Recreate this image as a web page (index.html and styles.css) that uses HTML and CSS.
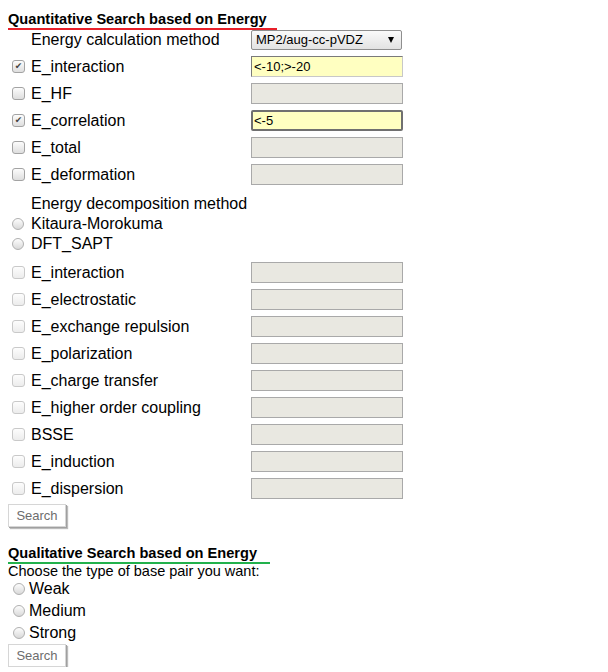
FILE: index.html
```html
<!DOCTYPE html>
<html>
<head>
    <title>Energy Search</title>
    <meta charset="utf-8" />
    <link rel="stylesheet" href="styles.css">
</head>
<body>
    <h3 class="title title-red">Quantitative Search based on Energy</h3>
    <div class="fields">
        <span></span>
        <span class="lbl">Energy calculation method</span>
        <span class="select-wrap">
            <select class="method">
                <option>MP2/aug-cc-pVDZ</option>
            </select>
        </span>

        <span class="check on">&#10004;</span>
        <span class="lbl">E_interaction</span>
        <input type="text" class="field filled" value="<-10;>-20">

        <span class="check"></span>
        <span class="lbl">E_HF</span>
        <input type="text" class="field">

        <span class="check on">&#10004;</span>
        <span class="lbl">E_correlation</span>
        <input type="text" class="field filled focused" value="<-5">

        <span class="check"></span>
        <span class="lbl">E_total</span>
        <input type="text" class="field">

        <span class="check"></span>
        <span class="lbl">E_deformation</span>
        <input type="text" class="field">
    </div>

    <div class="decomp">
        <div class="decomp-title">Energy decomposition method</div>
        <div class="radio-row"><span class="radio"></span>Kitaura-Morokuma</div>
        <div class="radio-row"><span class="radio"></span>DFT_SAPT</div>
    </div>

    <div class="fields fields-off">
        <span class="check"></span><span class="lbl">E_interaction</span><input type="text" class="field">
        <span class="check"></span><span class="lbl">E_electrostatic</span><input type="text" class="field">
        <span class="check"></span><span class="lbl">E_exchange repulsion</span><input type="text" class="field">
        <span class="check"></span><span class="lbl">E_polarization</span><input type="text" class="field">
        <span class="check"></span><span class="lbl">E_charge transfer</span><input type="text" class="field">
        <span class="check"></span><span class="lbl">E_higher order coupling</span><input type="text" class="field">
        <span class="check"></span><span class="lbl">BSSE</span><input type="text" class="field">
        <span class="check"></span><span class="lbl">E_induction</span><input type="text" class="field">
        <span class="check"></span><span class="lbl">E_dispersion</span><input type="text" class="field">
    </div>
    <button class="searchbtn">Search</button>

    <h3 class="title title-green second">Qualitative Search based on Energy</h3>
    <div class="choose">Choose the type of base pair you want:</div>
    <div class="strength">
        <div class="radio-row"><span class="radio"></span>Weak</div>
        <div class="radio-row"><span class="radio"></span>Medium</div>
        <div class="radio-row"><span class="radio"></span>Strong</div>
    </div>
    <button class="searchbtn">Search</button>
</body>
</html>
```

FILE: styles.css
```css
body {
    margin: 8px;
    font-family: "Liberation Sans", Arial, sans-serif;
    color: #000;
    background: #fff;
}

.title {
    display: block;
    width: fit-content;
    margin: 3px 0 -1px -5px;
    padding: 0 10px 0 5px;
    font-size: 14.6px;
    line-height: 17px;
    font-weight: bold;
}

.title-red {
    border-bottom: 2px solid #e8202a;
}

.title-green {
    border-bottom: 2px solid #22b14c;
    padding-right: 13px;
}

.second {
    margin-top: 17px;
    margin-bottom: 0;
    line-height: 18px;
}

.fields {
    display: grid;
    grid-template-columns: 23px 220px 152px;
    grid-auto-rows: 21px;
    row-gap: 6px;
    align-items: center;
}

.lbl {
    font-size: 16px;
    line-height: 21px;
    white-space: nowrap;
}

.check {
    display: block;
    box-sizing: border-box;
    width: 13px;
    height: 13px;
    margin-left: 4px;
    border: 1px solid #a3a3a3;
    border-radius: 3px;
    background: linear-gradient(#fcfcfc, #dedede);
    font-family: "DejaVu Sans", sans-serif;
    font-size: 9px;
    line-height: 11px;
    text-align: center;
    color: #444;
}

.fields-off .check {
    border-color: #c9c9c9;
    background: linear-gradient(#fdfdfd, #ececec);
}

.field {
    box-sizing: border-box;
    width: 152px;
    height: 21px;
    margin: 0;
    padding: 0 2px;
    border: 1px solid #a9a9a9;
    background: #e9e8e1;
    font-family: "Liberation Sans", Arial, sans-serif;
    font-size: 13px;
    color: #000;
}

.filled {
    background: #ffffc1;
    border-color: #7a7a7a #c8c8c8 #c8c8c8 #7a7a7a;
}

.focused {
    border: 2px solid #707070;
    border-radius: 2px;
    padding-left: 1px;
}

.select-wrap {
    position: relative;
    display: block;
    width: 151px;
    height: 20px;
}

.select-wrap::after {
    content: "";
    position: absolute;
    right: 8px;
    top: 7px;
    border-left: 3.5px solid transparent;
    border-right: 3.5px solid transparent;
    border-top: 6px solid #000;
}

.method {
    appearance: none;
    box-sizing: border-box;
    width: 151px;
    height: 20px;
    margin: 0;
    padding: 0 0 0 4px;
    border: 1px solid #8e8e8e;
    border-radius: 2px;
    background: linear-gradient(#fafafa, #e2e2e2);
    font-family: "Liberation Sans", Arial, sans-serif;
    font-size: 13px;
    color: #000;
}

.decomp {
    margin: 9px 0 8px;
    font-size: 16px;
    line-height: 20px;
}

.decomp-title {
    padding-left: 23px;
}

.radio-row {
    display: flex;
    align-items: center;
    white-space: nowrap;
}

.radio {
    display: block;
    box-sizing: border-box;
    width: 12px;
    height: 12px;
    margin: 0 7px 0 4px;
    border: 1px solid #b0b0b0;
    border-radius: 50%;
    background: linear-gradient(#fdfdfd, #d9d9d9);
}

.searchbtn {
    display: block;
    box-sizing: border-box;
    width: 58px;
    height: 23px;
    margin: 5px 0 0;
    padding: 0;
    border: 1px solid #d6d6d6;
    background: #fff;
    box-shadow: 1px 1px 0 #a0a0a0, 2px 2px 1px #bcbcbc;
    font-family: "Liberation Sans", Arial, sans-serif;
    font-size: 13px;
    color: #6d6d6d;
}

.choose {
    font-size: 14.5px;
    line-height: 14px;
}

.strength {
    font-size: 16px;
    line-height: 22px;
}

.strength .radio {
    margin: 0 4px 0 5px;
}

.strength + .searchbtn {
    margin-top: 0;
}
```
